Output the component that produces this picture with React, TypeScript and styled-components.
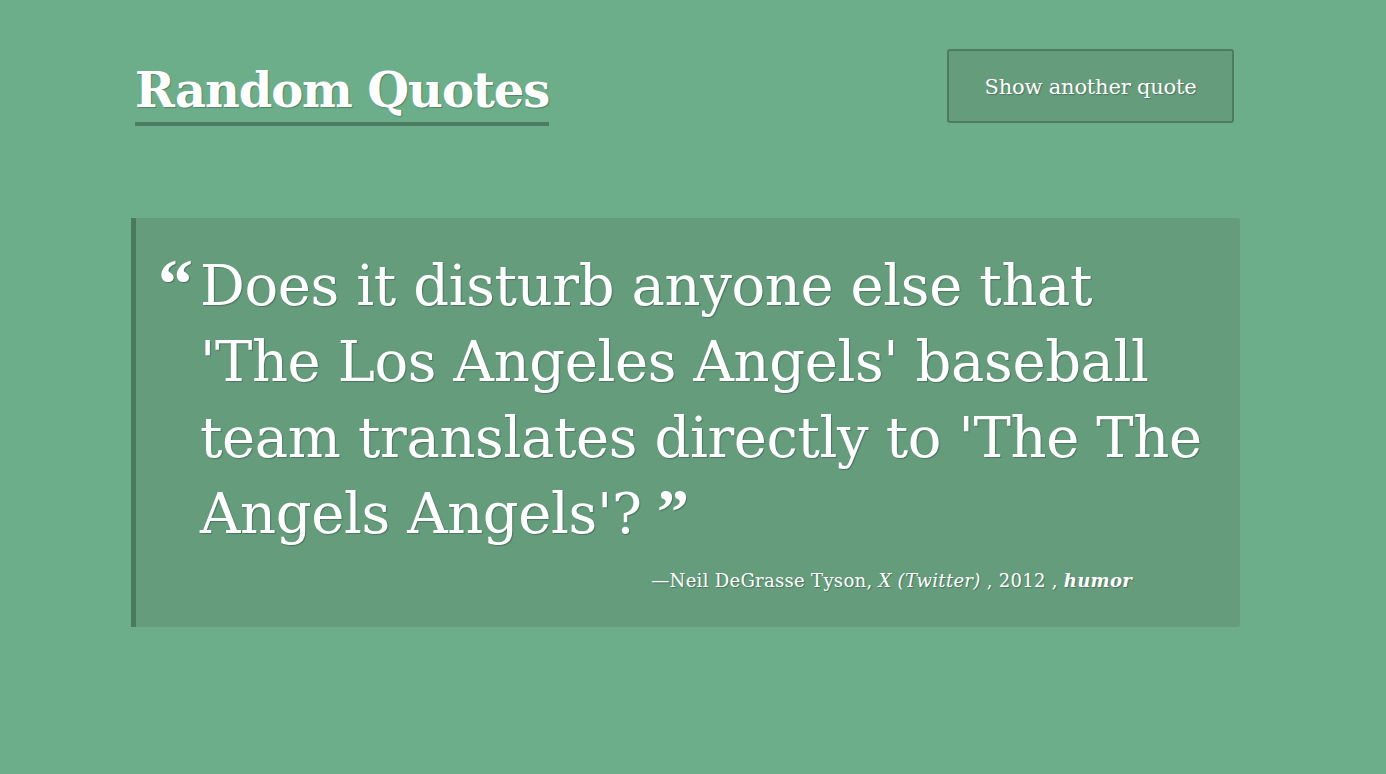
import React from 'react'
import styled, { createGlobalStyle } from 'styled-components'

const GlobalStyle = createGlobalStyle`
    html, body {
        margin: 0;
        padding: 0;
        background: #6cae8a;
    }
    body {
        font-family: "DejaVu Serif", "Liberation Serif", serif;
        color: #ffffff;
    }
`

const quote = {
    text: "Does it disturb anyone else that 'The Los Angeles Angels' baseball team translates directly to 'The The Angels Angels'?",
    author: 'Neil DeGrasse Tyson',
    source: 'X (Twitter)',
    year: '2012',
    category: 'humor',
}

export default function App() {
    return (
        <>
            <GlobalStyle />
            <Page>
                <Header>
                    <Title>Random Quotes</Title>
                    <NextButton type="button">Show another quote</NextButton>
                </Header>
                <QuoteCard>
                    <QuoteBody>
                        <OpenMark>“</OpenMark>
                        <QuoteText>
                            {quote.text} <CloseMark>”</CloseMark>
                        </QuoteText>
                    </QuoteBody>
                    <Attribution>
                        —{quote.author}, <Source>{quote.source}</Source> , {quote.year} , <Category>{quote.category}</Category>
                    </Attribution>
                </QuoteCard>
            </Page>
        </>
    )
}

const Page = styled.div`
    width: 1109px;
    margin-left: 131px;
    padding-top: 49px;
`

const Header = styled.header`
    display: flex;
    justify-content: space-between;
    align-items: flex-start;
    padding: 0 6px 0 4px;
`

const Title = styled.h1`
    margin: 9px 0 0;
    font-family: "DejaVu Serif", serif;
    font-size: 48px;
    font-weight: bold;
    line-height: 64px;
    letter-spacing: -1.1px;
    text-shadow: 1px 1px 1px rgba(0, 0, 0, 0.25);
    border-bottom: 4px solid #4d7d61;
`

const NextButton = styled.button`
    width: 287px;
    height: 74px;
    padding-top: 3px;
    background: #649c7c;
    border: 2px solid #4e7c60;
    border-radius: 3px;
    color: #ffffff;
    font-family: "DejaVu Serif", serif;
    font-size: 21px;
    letter-spacing: -0.2px;
    text-shadow: 1px 1px 1px rgba(0, 0, 0, 0.25);
    cursor: pointer;
`

const QuoteCard = styled.blockquote`
    margin: 92px 0 0;
    height: 409px;
    box-sizing: border-box;
    background: #649c7c;
    border-left: 5px solid #4a7a5c;
    border-radius: 0 3px 3px 0;
    padding: 30px 20px 0 22px;
    display: flex;
    flex-direction: column;
`

const QuoteBody = styled.div`
    display: flex;
    align-items: flex-start;
    gap: 12px;
    text-shadow: 1px 1px 1px rgba(0, 0, 0, 0.25);
`

const OpenMark = styled.span`
    font-family: "Liberation Serif", serif;
    font-size: 70px;
    font-weight: bold;
    line-height: 76px;
    width: 30px;
    flex-shrink: 0;
    margin-top: -2px;
`

const QuoteText = styled.p`
    margin: 0;
    width: 1030px;
    font-size: 56px;
    line-height: 76px;
    letter-spacing: -0.4px;
`

const CloseMark = styled.span`
    font-family: "Liberation Serif", serif;
    font-weight: bold;
    font-size: 64px;
    line-height: 56px;
    margin-left: -2px;
`

const Attribution = styled.p`
    margin: 18px 0 0;
    padding-right: 88px;
    text-align: right;
    font-size: 18px;
    letter-spacing: 0.3px;
    text-shadow: 1px 1px 1px rgba(0, 0, 0, 0.25);
`

const Source = styled.em``

const Category = styled.em`
    font-weight: bold;
`
